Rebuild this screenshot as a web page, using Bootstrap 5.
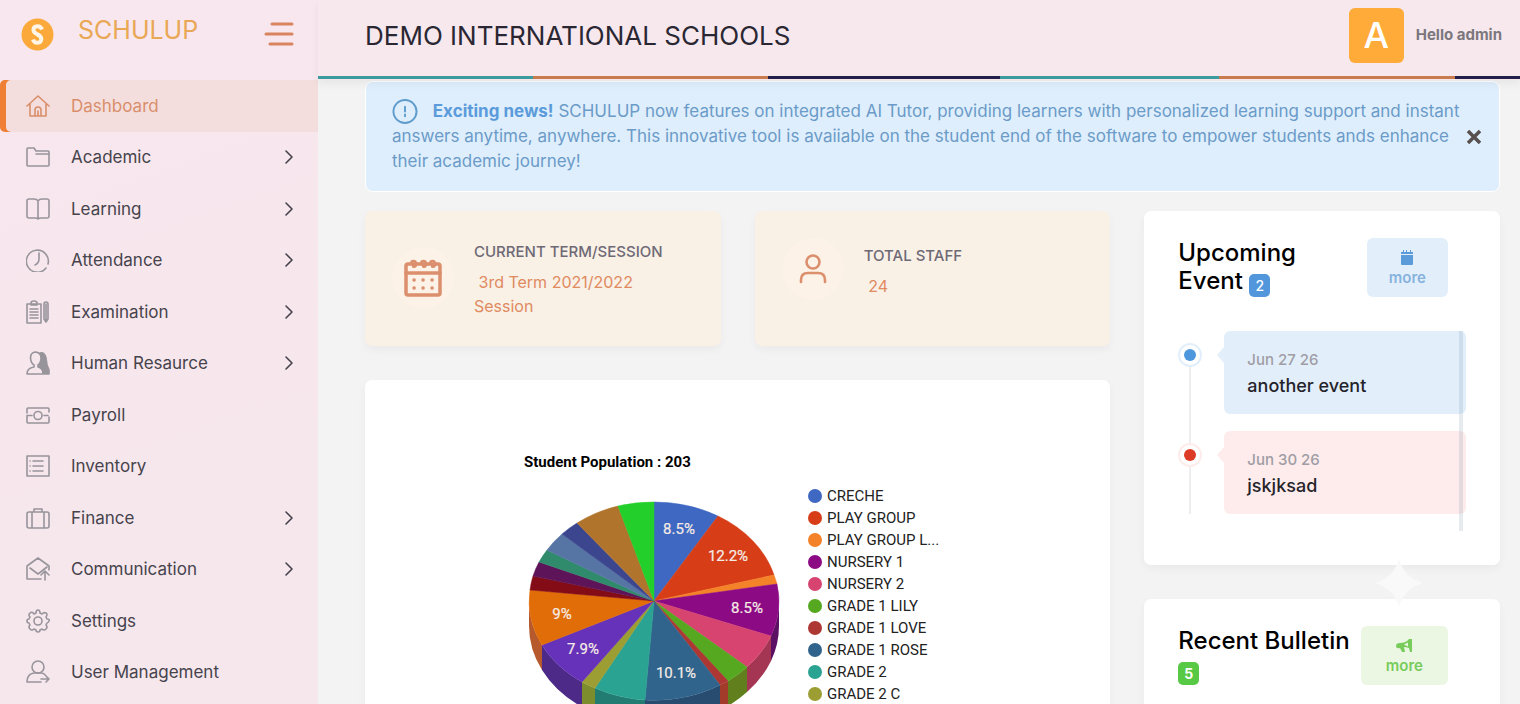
<!DOCTYPE html>
<html lang="en">
<head>
<meta charset="utf-8">
<meta name="viewport" content="width=device-width, initial-scale=1">
<title>Schulup - Dashboard</title>
<link href="https://cdn.jsdelivr.net/npm/bootstrap@5.3.0/dist/css/bootstrap.min.css" rel="stylesheet">
<style>
  :root { --pink: #f7e8ee; --orange: #e08a60; --amber: #ffab39; --blue: #5b9bd9; --sky: #e2effb; }
  body { font-family: Inter, "Open Sans", sans-serif; font-size: 16px; background: #f3f3f3; color: #24242e; }
  .app-shell { height: 100vh; overflow: hidden; }
  .side { width: 318px; background: linear-gradient(160deg, #f8e7ee, #f5e7ec); }
  .side-head { height: 80px; padding: 0 24px 12px 21px; }
  .brand { color: #e9a855; font-size: 25px; line-height: 32px; margin-bottom: 8px; }
  .menu-btn { width: 30px; height: 26px; }
  .side-nav { padding-bottom: 6px; }
  .side-link { min-height: 44px; padding: 0 24px 0 26px; color: #46434c; font-size: 17px; line-height: 24px; }
  .side-link .glyph { width: 24px; height: 24px; margin-right: 21px; color: #98949b; flex: none; }
  .side-link.current { background: #f4dedd; color: #d98e6b; box-shadow: inset 6px 0 0 #ef7f35; border-radius: 5px 0 0 5px; }
  .side-link.current .glyph { color: #d98e6b; }
  svg.line-art { fill: none; stroke: currentColor; stroke-width: 1.6; stroke-linecap: round; stroke-linejoin: round; }
  .topbar { height: 80px; padding: 0 18px 9px 47px; background: var(--pink); position: relative; z-index: 2; box-shadow: 0 4px 8px rgba(0,0,0,.05); flex: none; }
  .topbar::after { content: ""; position: absolute; left: 0; right: 0; bottom: 1px; height: 3px;
    background: linear-gradient(90deg, #3c9c9d 17.9%, #c97b50 17.9% 37.4%, #231f48 37.4% 56.7%, #3c9c9d 56.7% 75%, #c97b50 75% 94.6%, #231f48 94.6%); }
  .school { font-size: 26px; line-height: 34px; color: #2a2733; }
  .avatar { width: 55px; height: 55px; border-radius: 6px; background: var(--amber); font-size: 36px; line-height: 55px; }
  .hello { font-size: 15px; color: #7b777d; }
  .scroller { overflow-y: auto; scrollbar-width: none; padding: 0 20px 0 47px; }
  .scroller::-webkit-scrollbar { display: none; }
  .news { background: #deeefc; border: 1px solid #fff; border-radius: 8px; color: #6b9bc8; padding: 17px 16px 17px 26px; font-size: 17px; line-height: 25px; margin: 1px 0 19px; }
  .news strong { color: #5b9bdb; }
  .news .glyph { width: 26px; height: 25px; margin-right: 10px; color: #5f9ccb; vertical-align: top; }
  .board { --bs-gutter-x: 34px; --bs-gutter-y: 34px; }
  .panel { background: #fff; border-radius: 7px; box-shadow: 0 4px 8px rgba(0,0,0,.04); }
  .stat { background: #f9f0e6; padding: 27px 34px 28px 27px; }
  .stat-icon { width: 62px; height: 62px; background: #fcf2e8; color: #db8f6d; flex: none; }
  .stat-name { font-size: 15px; line-height: 28px; color: #6e6975; margin-bottom: 4px; }
  .stat-value { font-size: 16px; line-height: 24px; color: var(--orange); }
  .stat-value::first-line { color: var(--orange); }
  .chart { font-family: Roboto, sans-serif; padding: 70px 24px 40px 159px; }
  .chart-title { font-size: 15px; line-height: 24px; font-weight: 700; color: #000; margin-bottom: 11px; }
  .pie { width: 256px; height: 236px; margin-top: 16px; flex: none; }
  .pie text { fill: #f6ece6; font-size: 15px; text-anchor: middle; stroke: #f6ece6; stroke-width: .2; }
  .legend { font-size: 15px; line-height: 22px; color: #222; margin: 0 0 0 28px; }
  .dot { width: 14px; height: 14px; border-radius: 50%; margin-right: 5px; flex: none; }
  .panel-pad { padding: 27px 34px 34px; }
  .events-panel { margin-bottom: 34px; }
  .panel-title { font-size: 24px; line-height: 28px; color: #000; margin: 0; padding-top: 1px; }
  .count { display: inline-block; min-width: 21px; border-radius: 5px; color: #fff; font-size: 14px; line-height: 23px; text-align: center; vertical-align: -2px; }
  .more { border: 0; border-radius: 6px; font-size: 15px; font-weight: 600; line-height: 20px; height: 59px; padding: 3px 22px 0; margin-right: 18px; flex: none; }
  .more svg { width: 18px; height: 16px; display: block; margin: 0 auto 2px; }
  .more-blue { background: var(--sky); color: #86b2dd; }
  .more-blue svg { color: var(--blue); }
  .more-green { background: #ebf7e2; color: #77cc5c; padding: 3px 25px 0; }
  .timeline { height: 200px; margin-top: 34px; position: relative; }
  .scroll-thumb { position: absolute; right: 3px; top: 0; bottom: 0; width: 4px; background: rgba(90,120,150,.15); }
  .event { padding-bottom: 17px; }
  .rail { width: 24px; margin-right: 22px; position: relative; flex: none; }
  .rail::before { content: ""; position: absolute; left: 11px; top: 36px; bottom: -29px; width: 2px; background: #eeeef0; }
  .event-end .rail::before { bottom: 0; }
  .node { position: relative; width: 24px; height: 24px; margin-top: 12px; border: 2px solid var(--sky); background: #fff; border-radius: 50%; display: grid; place-items: center; color: #4f97dc; }
  .node-red { color: #dc3c26; border-color: #fdeceb; }
  .node::after { content: ""; width: 12px; height: 12px; border-radius: 50%; background: currentColor; }
  .event-card { --tone: #e2effb; position: relative; border-radius: 6px; padding: 16px 23px 15px; background: var(--tone); }
  .event-red { --tone: #fdeceb; }
  .event-card::before { content: ""; position: absolute; left: -7px; top: 16px; border: solid transparent; border-width: 8px 7px 8px 0; border-right-color: var(--tone); }
  .event-date { font-size: 15px; line-height: 26px; color: #a09da5; }
  .event-name { font-size: 18px; line-height: 26px; color: #25232a; font-weight: 500; }
  .sparkle { position: absolute; right: 77px; bottom: -42px; width: 48px; height: 48px; }
</style>
</head>
<body>
<div class="app-shell d-flex">
  <aside class="side d-flex flex-column flex-shrink-0">
    <div class="side-head d-flex align-items-center">
      <svg width="33" height="33" viewBox="0 0 33 33" class="flex-shrink-0" aria-hidden="true"><circle cx="16.500" cy="16.500" r="16" fill="#fba93a"/><path d="M21 11.500C19.500 7 12.500 7 12.500 12c0 5 8 3.800 7.800 9-.2 5-7 5-8.300.5" fill="none" stroke="#fff5e6" stroke-width="4"/></svg>
      <a href="#" class="brand text-decoration-none ms-4">SCHULUP</a>
      <button type="button" class="menu-btn btn p-0 border-0 ms-auto d-block" aria-label="Toggle menu"><svg width="30" height="26" viewBox="0 0 30 26" class="d-block" stroke="#d8855f" stroke-width="3" stroke-linecap="round"><path d="M8 3H28M2 13H28M6 23H28"/></svg></button>
    </div>
    <nav class="side-nav d-flex flex-column flex-fill" id="sideNav"></nav>
  </aside>

  <div class="d-flex flex-column flex-fill" style="min-width:0">
    <header class="topbar d-flex align-items-center justify-content-between">
      <h1 class="school fw-normal m-0">DEMO INTERNATIONAL SCHOOLS</h1>
      <div class="d-flex align-items-center">
        <span class="avatar text-white text-center fw-medium me-2">A</span>
        <span class="hello fw-bold ps-1">Hello admin</span>
      </div>
    </header>

    <main class="scroller flex-fill">
      <div class="news d-flex align-items-center justify-content-between" role="alert">
        <div class="text-nowrap">
          <svg class="glyph line-art" viewBox="0 0 26 26" aria-hidden="true" style="stroke-width:2"><circle cx="13" cy="13" r="12"/><path d="M13 8v5M13 16v2"/></svg>
          <strong>Exciting news!</strong> SCHULUP now features on integrated AI Tutor, providing learners with personalized learning support and instant<br>
          answers anytime, anywhere. This innovative tool is avaiiable on the student end of the software to empower students ands enhance<br>
          their academic journey!
        </div>
        <button type="button" class="btn p-0 border-0 lh-1" aria-label="Close"><svg width="18" height="18" viewBox="0 0 18 18" stroke="#57504f" stroke-width="3.500" class="d-block"><path d="M3 3 15 15M15 3 3 15"/></svg></button>
      </div>

      <div class="row board">
        <div class="col-8">
          <div class="row board">
            <div class="col-6">
              <div class="panel stat d-flex align-items-center h-100">
                <span class="stat-icon rounded-circle d-grid me-3" style="place-items:center">
                  <svg class="line-art" width="40" height="40" viewBox="0 0 40 40" style="stroke-width:3.500"><rect x="3" y="6" width="34" height="31" rx="2"/><path d="M3 15H37"/><path d="M8 6c0-4 5-4 5 0s-5 3-2 1M18 6c0-4 5-4 5 0s-5 3-2 1M27 6c0-4 5-4 5 0s-5 3-2 1" stroke-width="2.500"/><path d="M11 22h.1M20 22h.1M29 22h.1M11 30h.1M20 30h.1M29 30h.1"/></svg>
                </span>
                <div class="ps-1">
                  <div class="stat-name fw-medium text-nowrap">CURRENT TERM/SESSION</div>
                  <div class="stat-value">&nbsp;3rd Term 2021/2022<br>Session</div>
                </div>
              </div>
            </div>
            <div class="col-6">
              <div class="panel stat d-flex align-items-start h-100">
                <span class="stat-icon rounded-circle d-grid me-3" style="place-items:center">
                  <svg class="line-art" width="30" height="32" viewBox="0 0 30 32" style="stroke-width:2.600"><circle cx="15" cy="9" r="6.500"/><path d="M3 29V27C3 22 6 20 10 20h10c4 0 7 2 7 7v2"/></svg>
                </span>
                <div class="ps-1 pt-1">
                  <div class="stat-name fw-medium">TOTAL STAFF</div>
                  <div class="stat-value">&nbsp;24</div>
                </div>
              </div>
            </div>
            <div class="col-12">
              <section class="panel chart">
                <h2 class="chart-title">Student Population : 203</h2>
                <div class="d-flex align-items-start">
                  <svg class="pie" id="pie" viewBox="0 0 256 236" role="img" aria-label="Student population by class"></svg>
                  <ul class="legend list-unstyled" id="legend"></ul>
                </div>
              </section>
            </div>
          </div>
        </div>

        <div class="col-4 d-flex flex-column">
          <section class="panel panel-pad position-relative events-panel">
            <div class="d-flex justify-content-between align-items-start">
              <h2 class="panel-title fw-medium">Upcoming<br>Event <span class="count" style="background:#5296dc">2</span></h2>
              <button type="button" class="more more-blue"><svg viewBox="0 0 18 16" fill="currentColor"><path d="M3 2h2V0h1v2h2V0h1v2h3V0h1v2h2v2H3zM3 5h12v9q0 1-1 1H4q-1 0-1-1z"/></svg>more</button>
            </div>
            <div class="timeline">
              <div class="event d-flex">
                <div class="rail"><div class="node"></div></div>
                <div class="event-card flex-fill"><div class="event-date fw-medium">Jun 27 26</div><div class="event-name">another event</div></div>
              </div>
              <div class="event event-end d-flex">
                <div class="rail"><div class="node node-red"></div></div>
                <div class="event-card event-red flex-fill"><div class="event-date fw-medium">Jun 30 26</div><div class="event-name">jskjksad</div></div>
              </div>
              <div class="scroll-thumb"></div>
            </div>
            <svg class="sparkle" viewBox="0 0 48 48" fill="#f9f9f9" aria-hidden="true"><path d="M24 0q5 18 24 24-19 6-24 24Q19 30 0 24 19 18 24 0z"/></svg>
          </section>
          <section class="panel panel-pad">
            <div class="d-flex justify-content-between align-items-start">
              <h2 class="panel-title fw-medium text-nowrap">Recent Bulletin<br><span class="count fw-bold" style="background:#58c944">5</span></h2>
              <button type="button" class="more more-green"><svg viewBox="0 0 18 16" fill="currentColor"><path d="M1 8q0-3 4-3 6 0 9-4h3v13h-2l-1-4q-3-1-5-1l1 5H7L5 10Q1 11 1 8z"/><path d="M9 6.500l4-2v4z" fill="#ebf7e2"/></svg>more</button>
            </div>
            <div class="timeline"></div>
          </section>
        </div>
      </div>
    </main>
  </div>
</div>

<script src="https://cdn.jsdelivr.net/npm/bootstrap@5.3.0/dist/js/bootstrap.bundle.min.js"></script>
<script>
  // Sidebar entries: label, has submenu, icon markup on a 24px grid
  const menu = [
    ['Dashboard', 0, '<path d="M1 12 12 2 23 12M4 10v12h16V10M9 22v-6q0-3 3-3t3 3v6M12 22v-5"/>'],
    ['Academic', 1, '<path d="M1 4q0-1 1-1h6l2 3h12q1 0 1 1v13q0 1-1 1H2q-1 0-1-1zM10 9h12"/>'],
    ['Learning', 1, '<path d="M12 4v18M12 4Q11 2 8 2H3Q1 2 1 4v15q0 2 2 2h6q2 0 3 1 1-1 3-1h6q2 0 2-2V4q0-2-2-2h-5q-3 0-4 2z"/>'],
    ['Attendance', 1, '<path d="M20 20A11 11 0 1 1 22 16M13 5v6q0 4-4 6"/>'],
    ['Examination', 1, '<path d="M1 4h14v19H1zM5 3q0-2 3-2t3 2v2H5zM4 9h8M4 12h8M4 15h8M4 18h8M18 4q0-2 2-2t2 2v15l-2 3-2-3zM20 4v16"/>'],
    ['Human Resaurce', 1, '<path d="M14 2q5-1 6 5l1 7 2 5v4h-5l-5-9z" fill="currentColor"/><path d="M10 1C4 1 4 7 5 10q1 3 3 4v2q-7 1-7 7h16q0-6-5-7v-2q3-2 3-7t-5-6z" fill="#f6e7ed"/>'],
    ['Payroll', 0, '<path d="M1 10V6q0-1 1-1h20q1 0 1 1v3M1 13v6q0 1 1 1h20q1 0 1-1v-5M1 12.500h5M18 12.500h4"/><circle cx="12" cy="12.500" r="4"/>'],
    ['Inventory', 0, '<path d="M1 2h22v20H1zM7 7h10M7 12h10M7 17h10M4 7h.1M4 12h.1M4 17h.1"/>'],
    ['Finance', 1, '<path d="M3 6h18q2 0 2 2v12q0 2-2 2H3q-2 0-2-2V8q0-2 2-2zM8 6V3h8v3M6 6v16M18 6v16"/>'],
    ['Communication', 1, '<path d="M15 22H1V9L12 1l11 8v4M4 11l8 6 9-7M19 23v-9M15 18l4-4 4 4"/>'],
    ['Settings', 0, '<circle cx="12" cy="12" r="4"/><path d="M12 1q2 0 2 3l2 1q2-2 4-1t0 4l1 2q3 0 2 2t-2 2l-1 2q2 2 0 4t-4 0l-2 1q0 2-2 2t-2-2l-2-1q-2 2-4 0t0-4l-1-2q-2 0-2-2t2-2l1-2q-2-2 0-4t4 1l2-1q0-3 2-3z"/>'],
    ['User Management', 0, '<circle cx="12" cy="7" r="6"/><path d="M15 22H1q0-8 7-9h8q3 1 4 3M15 19h8M20 16l3 3-3 3"/>']
  ];
  document.getElementById('sideNav').innerHTML = menu.map(([label, sub, art], i) =>
    `<a href="#" class="side-link d-flex align-items-center flex-fill text-decoration-none${i ? '' : ' current'}">
      <svg class="glyph line-art" viewBox="0 0 24 24" aria-hidden="true">${art}</svg>
      <span class="me-auto">${label}</span>
      ${sub ? '<svg class="line-art" width="10" height="16" viewBox="0 0 10 16"><path d="M2 2l6 6-6 6"/></svg>' : ''}
    </a>`).join('');

  // Class shares: name, percent of students, colour, colour of the rim, printed label
  const shares = [
    ['CRECHE', 8.5, '#3f68c2', '#2f4e90', '8.5%'],
    ['PLAY GROUP', 12.2, '#d73e18', '#a02e12', '12.2%'],
    ['PLAY GROUP L...', 1.5, '#f48228', '#b8601c', ''],
    ['NURSERY 1', 8.5, '#8d0a85', '#5c1064', '8.5%'],
    ['NURSERY 2', 6, '#d6446f', '#a43653', ''],
    ['GRADE 1 LILY', 3.2, '#55a81f', '#627f1e', ''],
    ['GRADE 1 LOVE', 1.2, '#ac3733', '#a33b2a', ''],
    ['GRADE 1 ROSE', 10.1, '#31648c', '#284c70', '10.1%'],
    ['GRADE 2', 6.6, '#2aa392', '#237c72', ''],
    ['GRADE 2 C', 2, '#9c9d32', '#7d8c2c', ''],
    ['', 7.9, '#6632b9', '#4e2a88', '7.9%'],
    ['', 9, '#e16d09', '#b65a2e', '9%'],
    ['', 2.3, '#840c16', '', ''],
    ['', 2.4, '#5d1458', '', ''],
    ['', 2.3, '#308a6c', '', ''],
    ['', 3.2, '#5674a4', '', ''],
    ['', 2.6, '#3b468f', '', ''],
    ['', 5.9, '#b0742c', '', ''],
    ['', 4.6, '#23d02b', '', '']
  ];
  const cx = 130, cy = 100, rx = 125, ry = 99, depth = 25;
  const at = (pct, k = 1) => {
    const a = pct / 100 * 2 * Math.PI;
    return [Math.round(cx + k * rx * Math.sin(a)), Math.round(cy - k * ry * Math.cos(a))];
  };
  let from = 0, rims = '', tops = '', marks = '';
  for (const [, pct, top, rim, mark] of shares) {
    const to = from + pct, [x1, y1] = at(from), [x2, y2] = at(to);
    tops += `<path fill="${top}" stroke="${top}" stroke-width=".5" d="M${cx} ${cy}L${x1} ${y1}A${rx} ${ry} 0 0 1 ${x2} ${y2}Z"/>`;
    const a = Math.max(from, 25), b = Math.min(to, 75);
    if (a < b) {
      const [u1, v1] = at(a), [u2, v2] = at(b);
      rims += `<path fill="${rim}" d="M${u1} ${v1}A${rx} ${ry} 0 0 1 ${u2} ${v2}v${depth}A${rx} ${ry} 0 0 0 ${u1} ${v1 + depth}Z"/>`;
    }
    if (mark) {
      const [mx, my] = at((from + to) / 2, .75);
      marks += `<text x="${mx}" y="${my + 5}">${mark}</text>`;
    }
    from = to;
  }
  document.getElementById('pie').innerHTML = rims + tops + marks;
  document.getElementById('legend').innerHTML = shares.filter(s => s[0]).map(([name, , colour]) =>
    `<li class="d-flex align-items-center"><span class="dot" style="background:${colour}"></span>${name}</li>`).join('');
</script>
</body>
</html>
